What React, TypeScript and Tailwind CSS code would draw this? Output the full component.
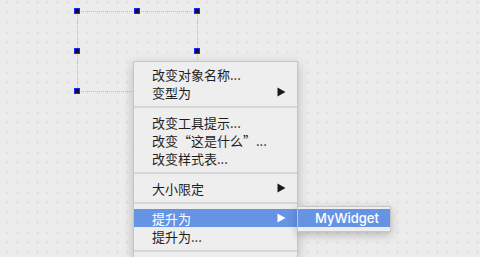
import React from "react";

type Item =
  | { kind: "sep" }
  | { kind: "item"; label: string; arrow?: boolean; active?: boolean };

const items: Item[] = [
  { kind: "item", label: "改变对象名称..." },
  { kind: "item", label: "变型为", arrow: true },
  { kind: "sep" },
  { kind: "item", label: "改变工具提示..." },
  { kind: "item", label: "改变“这是什么”..." },
  { kind: "item", label: "改变样式表..." },
  { kind: "sep" },
  { kind: "item", label: "大小限定", arrow: true },
  { kind: "sep" },
  { kind: "item", label: "提升为", arrow: true, active: true },
  { kind: "item", label: "提升为..." },
  { kind: "sep" },
];

function Arrow({ white }: { white?: boolean }) {
  return (
    <svg width="9" height="10" viewBox="0 0 9 10" className="shrink-0">
      <path d="M0.5 0.5 L8.5 5 L0.5 9.5 Z" fill={white ? "#ffffff" : "#1a1a1a"} />
    </svg>
  );
}

function Handle({ x, y }: { x: number; y: number }) {
  return (
    <div
      className="absolute w-[6px] h-[6px] bg-[#111122] border border-[#2222ff]"
      style={{ left: x - 3, top: y - 3 }}
    />
  );
}

export default function App() {
  return (
    <div
      className="relative w-[480px] h-[257px] overflow-hidden bg-[#ececec] bg-[radial-gradient(circle,#c9c9c9_0.5px,transparent_0.9px)] bg-[length:10px_10px] bg-[position:2.5px_-2.5px]"
      style={{ fontFamily: '"Noto Sans CJK SC", "Noto Sans", sans-serif' }}
    >
      {/* selected widget on the form */}
      <div className="absolute left-[77px] top-[11px] w-[121px] h-[81px] border border-dotted border-[#bcbcbc]" />
      <Handle x={77} y={11} />
      <Handle x={137} y={11} />
      <Handle x={197} y={11} />
      <Handle x={77} y={51} />
      <Handle x={197} y={51} />
      <Handle x={77} y={91} />

      {/* context menu */}
      <div className="absolute left-[133px] top-[61px] w-[165px] bg-[#eeeeee] border border-[#c6c6c6] pt-[3px] shadow-[0_3px_10px_rgba(0,0,0,0.22)]">
        {items.map((it, i) =>
          it.kind === "sep" ? (
            <div key={i} className="h-[12px] flex items-center">
              <div className="w-full h-[2px] bg-[#d6d6d6]" />
            </div>
          ) : (
            <div
              key={i}
              className={`h-[18px] flex items-center justify-between pl-[18px] pr-[11px] text-[13px] leading-none ${
                it.active ? "bg-[#6793e5] text-white" : "text-[#1e1e1e]"
              }`}
            >
              <span>{it.label}</span>
              {it.arrow && <Arrow white={it.active} />}
            </div>
          )
        )}
      </div>

      {/* submenu */}
      <div className="absolute left-[297px] top-[206px] w-[94px] h-[26px] bg-[#eeeeee] border border-[#c6c6c6] pt-[2px] shadow-[0_3px_10px_rgba(0,0,0,0.22)]">
        <div
          className="h-[18px] flex items-center pl-[17px] bg-[#6793e5] text-white text-[13px] font-medium leading-none"
          style={{ fontFamily: "Inter, sans-serif" }}
        >
          MyWidget
        </div>
      </div>
    </div>
  );
}
